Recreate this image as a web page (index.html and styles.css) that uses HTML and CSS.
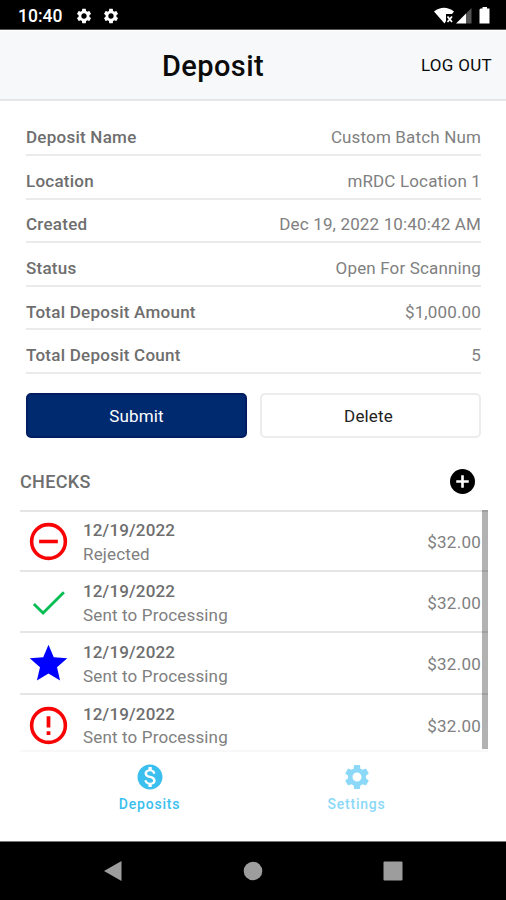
FILE: index.html
```html
<!DOCTYPE html>
<html lang="en">
<head>
<meta charset="utf-8">
<title>Deposit</title>
<link rel="stylesheet" href="styles.css">
</head>
<body>
<svg class="defs" width="0" height="0">
  <symbol id="gear" viewBox="0 0 24 24"><path d="M19.14 12.94c.04-.3.06-.61.06-.94 0-.32-.02-.64-.07-.94l2.03-1.58a.49.49 0 0 0 .12-.61l-1.92-3.32a.488.488 0 0 0-.59-.22l-2.39.96c-.5-.38-1.03-.7-1.62-.94l-.36-2.54a.484.484 0 0 0-.48-.41h-3.84c-.24 0-.43.17-.47.41l-.36 2.54c-.59.24-1.13.57-1.62.94l-2.39-.96c-.22-.08-.47 0-.59.22L2.74 8.87c-.12.21-.08.47.12.61l2.03 1.58c-.05.3-.09.63-.09.94s.02.64.07.94l-2.03 1.58a.49.49 0 0 0-.12.61l1.92 3.32c.12.22.37.29.59.22l2.39-.96c.5.38 1.03.7 1.62.94l.36 2.54c.05.24.24.41.48.41h3.84c.24 0 .44-.17.47-.41l.36-2.54c.59-.24 1.13-.56 1.62-.94l2.39.96c.22.08.47 0 .59-.22l1.92-3.32c.12-.22.07-.47-.12-.61l-2.01-1.58zM12 15.6A3.61 3.61 0 0 1 8.4 12c0-1.98 1.62-3.6 3.6-3.6s3.6 1.62 3.6 3.6-1.62 3.6-3.6 3.6z"/></symbol>
</svg>
<div class="screen">
  <div class="status-bar">
    <span class="clock">10:40</span>
    <svg class="status-gear"><use href="#gear"/></svg>
    <svg class="status-gear"><use href="#gear"/></svg>
    <svg class="signals" viewBox="0 0 58 20">
      <path fill="#fff" d="M0 5.5Q10 -2 20 5.5L18 8H12V15L10.500 17.500Z"/>
      <path stroke="#fff" stroke-width="1.800" d="M13.500 10.500l4.500 5.500M18 10.500l-4.500 5.500"/>
      <path fill="#fff" d="M22 17.500L32 7.500V17.500Z"/>
      <path fill="#555" d="M32 7.500L37.500 2V17.500H32Z"/>
      <path fill="#fff" d="M46.500 2.500H48.500V1H53V2.500H55.500V17.500H45.500V3.500Z"/>
    </svg>
  </div>
  <header class="header">
    <h1>Deposit</h1>
    <span class="logout">LOG OUT</span>
  </header>
  <main>
    <dl class="details">
      <div class="detail"><dt>Deposit Name</dt><dd>Custom Batch Num</dd></div>
      <div class="detail"><dt>Location</dt><dd>mRDC Location 1</dd></div>
      <div class="detail"><dt>Created</dt><dd>Dec 19, 2022 10:40:42 AM</dd></div>
      <div class="detail"><dt>Status</dt><dd>Open For Scanning</dd></div>
      <div class="detail"><dt>Total Deposit Amount</dt><dd>$1,000.00</dd></div>
      <div class="detail"><dt>Total Deposit Count</dt><dd>5</dd></div>
    </dl>
    <div class="actions">
      <button class="button primary">Submit</button>
      <button class="button">Delete</button>
    </div>
    <div class="checks-head">
      <h2>CHECKS</h2>
      <svg class="add" viewBox="0 0 24 24"><circle cx="12" cy="12" r="12" fill="#000"/><path d="M12 6v12M6 12h12" stroke="#fff" stroke-width="2.500"/></svg>
    </div>
    <div class="checks">
      <div class="check">
        <svg class="icon" viewBox="0 0 24 24" fill="none" stroke="#f80404" stroke-width="1.900"><circle cx="12" cy="12" r="9"/><path d="M7 12h10"/></svg>
        <div class="info"><b>12/19/2022</b><span>Rejected</span></div><span class="amount">$32.00</span>
      </div>
      <div class="check">
        <svg class="icon" viewBox="0 0 24 24"><path fill="none" stroke="#09bd55" stroke-width="1.500" d="M4.200 12.800L9.100 17.600L20.200 6.500"/></svg>
        <div class="info"><b>12/19/2022</b><span>Sent to Processing</span></div><span class="amount">$32.00</span>
      </div>
      <div class="check">
        <svg class="icon" viewBox="0 0 24 24"><path fill="#00f" d="M12 17.270L18.180 21l-1.640-7.030L22 9.240l-7.190-.61L12 2 9.190 8.630 2 9.240l5.460 4.730L5.820 21z"/></svg>
        <div class="info"><b>12/19/2022</b><span>Sent to Processing</span></div><span class="amount">$32.00</span>
      </div>
      <div class="check">
        <svg class="icon" viewBox="0 0 24 24"><circle cx="12" cy="12" r="9" fill="none" stroke="#f80404" stroke-width="1.900"/><path fill="#f80404" d="M11 7h2v6h-2zM11 15h2v2h-2z"/></svg>
        <div class="info"><b>12/19/2022</b><span>Sent to Processing</span></div><span class="amount">$32.00</span>
      </div>
      <div class="scrollbar"></div>
    </div>
  </main>
  <nav class="tabs">
    <div class="tab active">
      <svg class="tab-icon coin" viewBox="0 0 24 24"><path fill="currentColor" d="M12 2C6.480 2 2 6.480 2 12s4.480 10 10 10 10-4.480 10-10S17.520 2 12 2zm1.410 16.090V20h-2.670v-1.930c-1.710-.36-3.160-1.460-3.270-3.400h1.960c.1 1.050.82 1.870 2.650 1.870 1.960 0 2.400-.98 2.400-1.590 0-.83-.44-1.610-2.670-2.140-2.480-.6-4.180-1.620-4.180-3.670 0-1.720 1.390-2.840 3.110-3.210V4h2.670v1.950c1.860.45 2.790 1.860 2.850 3.390H14.300c-.05-1.110-.64-1.870-2.220-1.870-1.500 0-2.400.68-2.400 1.640 0 .84.65 1.390 2.670 1.910s4.180 1.390 4.180 3.910c-.01 1.830-1.380 2.830-3.120 3.160z"/></svg>
      <span>Deposits</span>
    </div>
    <div class="tab">
      <svg class="tab-icon"><use href="#gear"/></svg>
      <span>Settings</span>
    </div>
  </nav>
  <div class="system-nav">
    <svg viewBox="0 0 20 22"><path d="M18.500 1V21L1 11Z"/></svg>
    <svg viewBox="0 0 20 22"><circle cx="10" cy="11" r="9.300"/></svg>
    <svg viewBox="0 0 20 22"><rect x=".5" y="1.500" width="19" height="19" rx="1"/></svg>
  </div>
</div>
</body>
</html>
```
FILE: styles.css
```css
* { box-sizing: border-box; }
body, h1, h2, dl, dd { margin: 0; }
body { background: #fff; font-family: Roboto, sans-serif; font-size: 17px; color: #747474; }
svg { display: block; flex: none; }
.defs { position: absolute; }
.screen { display: flex; flex-direction: column; width: 506px; height: 900px; overflow: hidden; }

.status-bar { flex: none; display: flex; align-items: center; height: 30px; padding: 2px 14px 0 18px; background: #000; border-bottom: 1px solid #555; color: #fff; }
.clock { width: 57px; font-size: 17.5px; font-weight: 500; letter-spacing: 0; }
.status-gear { width: 18px; height: 18px; margin-right: 9px; fill: #fff; }
.signals { width: 58px; height: 20px; margin-left: auto; }

.header { flex: none; display: flex; align-items: center; justify-content: space-between; height: 71px; padding: 1px 14px 0 162px; background: #f7f8fa; border-top: 1px solid #fff; border-bottom: 2px solid #e5e7ea; color: #0b0b0b; }
h1 { font-size: 29px; font-weight: 500; letter-spacing: .4px; line-height: 34px; padding-top: 1px; }
.logout { font-size: 17px; letter-spacing: .3px; padding-bottom: 1px; }

main { flex: none; height: 650px; padding-top: 11.500px; }
.details { padding: 0 25px 0 26px; }
.detail { display: flex; align-items: center; justify-content: space-between; height: 43.6px; padding-top: 8px; border-bottom: 2px solid #ebebeb; }
dt { font-weight: 500; letter-spacing: .25px; color: #6e6e6e; }
dd { letter-spacing: .15px; color: #808080; }

.actions { display: grid; grid-template-columns: 221px 221px; justify-content: space-between; margin: 18.500px 25px 0 26px; }
.button { height: 45px; padding: 2px 6px 0; border: 2px solid #ececec; border-radius: 5px; background: #fff; color: #222; font: 17px Roboto, sans-serif; letter-spacing: .15px; }
.button:last-child { padding-right: 10px; }
.primary { background: #002a70; border-color: #001d62; color: #fff; }

.checks-head { display: flex; align-items: center; justify-content: space-between; height: 72px; padding: 15px 31.500px 0 20px; }
h2 { font-size: 18px; font-weight: 500; letter-spacing: .35px; color: #6e6e6e; }
.add { width: 25px; height: 25px; }

.checks { position: relative; height: 242px; margin: 0 18px 0 20px; border-bottom: 2px solid #f8f8f8; overflow: hidden; }
.check { display: flex; align-items: center; height: 61.400px; padding: 1px 7px 0 6px; border-bottom: 2px solid #e5e5e5; }
.check:first-child { height: 62.500px; border-top: 2px solid #e5e5e5; }
.icon { width: 45px; height: 45px; }
.info { flex: 1; display: flex; flex-direction: column; margin-left: 12px; padding-top: 2.500px; line-height: 23.500px; }
.info b { font-weight: 500; letter-spacing: .15px; color: #6e6e6e; }
.info span { letter-spacing: .15px; color: #808080; }
.amount { padding-top: 1px; letter-spacing: .25px; color: #808080; }
.scrollbar { position: absolute; top: 0; right: 0; width: 6px; height: 239px; background: rgba(0, 0, 0, .3); }

.tabs { flex: none; display: flex; justify-content: center; height: 90px; padding-top: 13px; }
.tab { display: flex; flex-direction: column; align-items: center; width: 207px; color: #8bd8f8; font-size: 14px; font-weight: 500; letter-spacing: .8px; }
.tab.active { color: #3bbfee; }
.tab-icon { width: 30px; height: 30px; margin: -2px 0 4px; fill: currentColor; }

.system-nav { flex: 1; display: flex; justify-content: center; gap: 120px; padding-top: 18px; background: #000; border-top: 1px solid #777; fill: #9d9d9d; }
.system-nav svg { width: 20px; height: 22px; }
```
